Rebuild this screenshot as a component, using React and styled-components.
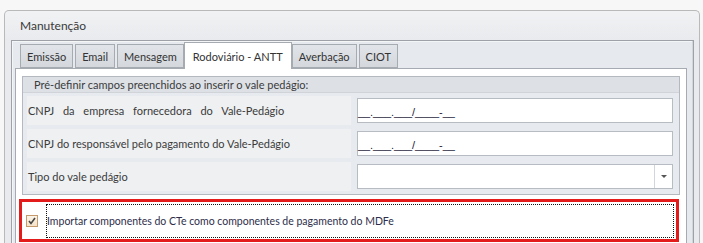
import React, { useState } from "react";
import styled, { createGlobalStyle } from "styled-components";

const GlobalStyle = createGlobalStyle`
  html, body {
    margin: 0;
    padding: 0;
    height: 243px;
    overflow: hidden;
    background: #f7f7f7;
    font-family: Lato, "Liberation Sans", Arial, sans-serif;
    font-size: 11px;
    color: #3b3b3b;
  }
`;

const Window = styled.div`
  margin: 10px 3px 0 4px;
  height: 260px;
  border: 1px solid #b9b9b9;
  border-bottom: none;
  border-radius: 5px 5px 0 0;
  background: linear-gradient(#f1f2f4, #e8eaed 30px);
  display: flex;
  flex-direction: column;
`;

const Title = styled.div`
  height: 29px;
  padding-left: 15px;
  display: flex;
  align-items: center;
  font-size: 12px;
  color: #3a3a3a;
`;

const TabControl = styled.div`
  margin: 0 5px 0 6px;
  flex: 1;
  border: 1px solid #9ea2a8;
  border-bottom: none;
  box-shadow: inset -1px 0 0 #d3d6da, inset 1px 1px 0 #f4f5f6;
  background: #e6e9ed;
  display: flex;
  flex-direction: column;
`;

const TabStrip = styled.div`
  display: flex;
  align-items: flex-end;
  gap: 2px;
  padding: 3px 0 0 8px;
  height: 24px;
  position: relative;
  z-index: 1;
`;

const Tab = styled.div`
  box-sizing: border-box;
  height: ${(p) => (p.$active ? "27px" : "24px")};
  padding: 0 ${(p) => (p.$active ? "8px" : "6px")};
  margin: ${(p) => (p.$active ? "0 -2px -1px -2px" : "0")};
  display: flex;
  align-items: center;
  justify-content: center;
  border: 1px solid #a6abb1;
  border-bottom: ${(p) => (p.$active ? "none" : "1px solid #a6abb1")};
  background: ${(p) => (p.$active ? "#ffffff" : "linear-gradient(#e1e4e8, #d4d8dd)")};
  color: #333;
  font-size: 11px;
  white-space: nowrap;
`;

const TabPage = styled.div`
  margin: 0 6px 0 3px;
  flex: 1;
  border: 1px solid #a6abb1;
  border-bottom: none;
  background: #ffffff;
  padding: 7px 6px 0 6px;
  display: flex;
  flex-direction: column;
  gap: 4px;
`;

const Group = styled.div`
  border: 1px solid #b4b9bf;
  background: #e7eaee;
  padding-bottom: 3px;
`;

const GroupHeader = styled.div`
  height: 15px;
  padding-left: 11px;
  display: flex;
  align-items: center;
  background: #dde1e6;
  border-bottom: 1px solid #d0d4d9;
  color: #3b3b3b;
`;

const Rows = styled.div`
  display: flex;
  flex-direction: column;
  gap: 4px;
  padding: 3px 6px 0 4px;
`;

const Row = styled.div`
  display: flex;
  align-items: center;
  gap: 6px;
  height: 29px;
`;

const Label = styled.div`
  width: 323px;
  height: 100%;
  display: flex;
  align-items: center;
  padding-left: 1px;
  background: #eef0f2;
  color: #3b3b3b;
  word-spacing: ${(p) => p.$spread || "0"};
  white-space: nowrap;
`;

const Input = styled.div`
  flex: 1;
  height: 25px;
  box-sizing: border-box;
  border: 1px solid #b7bcc3;
  background: #fff;
  display: flex;
  align-items: center;
  padding: 2px 0 0 0;
  color: #1a1a3a;
  font-family: "Liberation Sans", Arial, sans-serif;
  font-size: 11px;
  letter-spacing: -0.1px;
`;

const Select = styled(Input)`
  padding: 0;
  justify-content: flex-end;
`;

const DropButton = styled.div`
  width: 17px;
  height: 100%;
  border-left: 1px solid #d2d5da;
  display: flex;
  align-items: center;
  justify-content: center;
`;

const Arrow = styled.div`
  width: 0;
  height: 0;
  border-left: 3px solid transparent;
  border-right: 3px solid transparent;
  border-top: 3px solid #555;
`;

const Highlight = styled.div`
  margin: 0 1px 0 -3px;
  height: 34px;
  border: 3px solid #e31b1b;
  background: #fff;
  display: flex;
  align-items: center;
  padding: 2px 2px 1px 4px;
  gap: 8px;
`;

const Check = styled.div`
  width: 10px;
  height: 10px;
  flex: none;
  border: 1px solid #c49a6c;
  background: linear-gradient(#fbf4ea, #f3e2c8);
  display: flex;
  align-items: center;
  justify-content: center;
`;

const Focus = styled.div`
  flex: 1;
  align-self: stretch;
  border: 1px dotted #111;
  display: flex;
  align-items: center;
  color: #2e2e4a;
  font-size: 10.5px;
`;

const tabs = ["Emissão", "Email", "Mensagem", "Rodoviário - ANTT", "Averbação", "CIOT"];

export default function App() {
  const [active] = useState("Rodoviário - ANTT");
  const [checked] = useState(true);

  return (
    <>
      <GlobalStyle />
      <Window>
        <Title>Manutenção</Title>
        <TabControl>
          <TabStrip>
            {tabs.map((t) => (
              <Tab key={t} $active={t === active}>{t}</Tab>
            ))}
          </TabStrip>
          <TabPage>
            <Group>
              <GroupHeader>Pré-definir campos preenchidos ao inserir o vale pedágio:</GroupHeader>
              <Rows>
                <Row>
                  <Label $spread="6px">CNPJ da empresa fornecedora do Vale-Pedágio</Label>
                  <Input>__.___.___/____-__</Input>
                </Row>
                <Row>
                  <Label>CNPJ do responsável pelo pagamento do Vale-Pedágio</Label>
                  <Input>__.___.___/____-__</Input>
                </Row>
                <Row>
                  <Label>Tipo do vale pedágio</Label>
                  <Select>
                    <DropButton><Arrow /></DropButton>
                  </Select>
                </Row>
              </Rows>
            </Group>
            <Highlight>
              <Check>
                {checked && (
                  <svg width="8" height="8" viewBox="0 0 8 8">
                    <path d="M1 4 L3 6.5 L7 1" fill="none" stroke="#444" strokeWidth="1.6" />
                  </svg>
                )}
              </Check>
              <Focus>Importar componentes do CTe como componentes de pagamento do MDFe</Focus>
            </Highlight>
          </TabPage>
        </TabControl>
      </Window>
    </>
  );
}
